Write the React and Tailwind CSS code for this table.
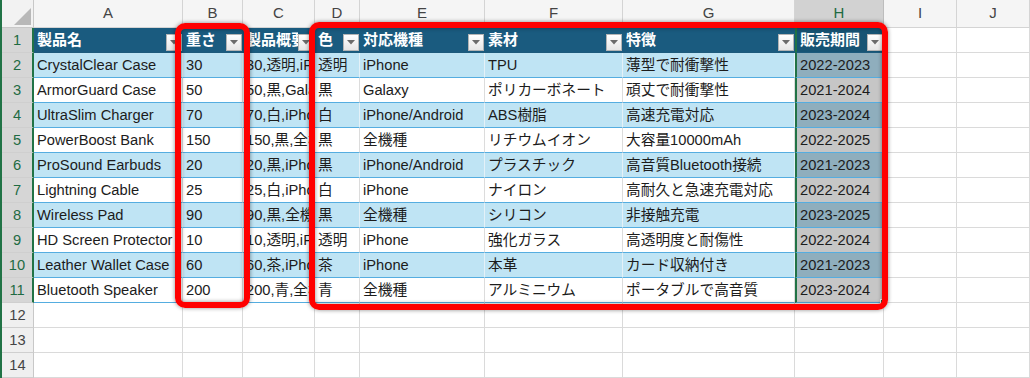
import React from "react";

const cols = ["A", "B", "C", "D", "E", "F", "G", "H", "I", "J"];

const headers = ["製品名", "重さ", "製品概要", "色", "対応機種", "素材", "特徴", "販売期間"];

const rows = [
  ["CrystalClear Case", "30", "30,透明,iPhone,TPU", "透明", "iPhone", "TPU", "薄型で耐衝撃性", "2022-2023"],
  ["ArmorGuard Case", "50", "50,黒,Galaxy", "黒", "Galaxy", "ポリカーボネート", "頑丈で耐衝撃性", "2021-2024"],
  ["UltraSlim Charger", "70", "70,白,iPhone/Android", "白", "iPhone/Android", "ABS樹脂", "高速充電対応", "2023-2024"],
  ["PowerBoost Bank", "150", "150,黒,全機種", "黒", "全機種", "リチウムイオン", "大容量10000mAh", "2022-2025"],
  ["ProSound Earbuds", "20", "20,黒,iPhone/Android", "黒", "iPhone/Android", "プラスチック", "高音質Bluetooth接続", "2021-2023"],
  ["Lightning Cable", "25", "25,白,iPhone", "白", "iPhone", "ナイロン", "高耐久と急速充電対応", "2022-2024"],
  ["Wireless Pad", "90", "90,黒,全機種", "黒", "全機種", "シリコン", "非接触充電", "2023-2025"],
  ["HD Screen Protector", "10", "10,透明,iPhone", "透明", "iPhone", "強化ガラス", "高透明度と耐傷性", "2022-2024"],
  ["Leather Wallet Case", "60", "60,茶,iPhone", "茶", "iPhone", "本革", "カード収納付き", "2021-2023"],
  ["Bluetooth Speaker", "200", "200,青,全機種", "青", "全機種", "アルミニウム", "ポータブルで高音質", "2023-2024"],
];

function FilterButton() {
  return (
    <div className="shrink-0 self-end mb-[1px] mr-[1px] w-[16px] h-[17px] bg-gradient-to-b from-white to-[#e6e6e6] border border-[#b4b4b4] flex items-center justify-center">
      <svg width="8" height="5" viewBox="0 0 8 5">
        <path d="M0 0 L8 0 L4 4.5 Z" fill="#6b6b6b" />
      </svg>
    </div>
  );
}

function RowHead({ n, selected }) {
  return (
    <div
      className={
        "flex items-center justify-center border-b border-[#cfcfcf] " +
        (selected
          ? "bg-[#d6d6d6] text-[#1e6b43] border-r-2 border-r-[#217346]"
          : "bg-[#efefef] text-[#444] border-r border-r-[#c8c8c8]")
      }
    >
      {n}
    </div>
  );
}

export default function App() {
  return (
    <div className="relative w-[1030px] h-[378px] overflow-hidden bg-white font-['Liberation_Sans','Noto_Sans_CJK_JP',sans-serif] text-[14.7px] text-[#1c1c1c] border-l-2 border-[#217346]">
      <div className="grid grid-cols-[32px_149px_60px_72px_45px_125px_138px_172px_89px_73px_73px] grid-rows-[28px_repeat(14,25px)]">
        {/* corner */}
        <div className="bg-[#f2f2f2] border-r border-b border-[#c8c8c8] flex items-end justify-end p-[2px]">
          <svg width="17" height="17" viewBox="0 0 17 17">
            <path d="M17 0 L17 17 L0 17 Z" fill="#b8b8b8" />
          </svg>
        </div>
        {cols.map((c) => (
          <div
            key={c}
            className={
              "flex items-center justify-center text-[15px] " +
              (c === "H"
                ? "bg-[#d2d2d2] text-[#1e6b43] border-r border-[#bdbdbd] border-b-2 border-b-[#217346]"
                : "bg-[#f5f5f5] text-[#444] border-r border-b border-[#d4d4d4]")
            }
          >
            {c}
          </div>
        ))}

        {/* row 1: table header */}
        <RowHead n={1} selected />
        {headers.map((h, i) => (
          <div
            key={h}
            className={
              "flex items-stretch overflow-hidden text-white font-bold text-[15px] border-b border-[#1d5a7c] " +
              (i === 7 ? "bg-[#175474] border-l-2 border-l-[#217346]" : "bg-[#1a5b7f]")
            }
          >
            <div className="flex-1 min-w-0 overflow-hidden whitespace-nowrap flex items-center pl-[3px]">
              {h}
            </div>
            <FilterButton />
          </div>
        ))}
        <div className="border-r border-b border-[#dadada]" />
        <div className="border-r border-b border-[#dadada]" />

        {/* data rows */}
        {rows.map((r, ri) => {
          const blue = ri % 2 === 0;
          return (
            <React.Fragment key={ri}>
              <RowHead n={ri + 2} selected />
              {r.map((v, ci) => {
                const isH = ci === 7;
                let bg = blue ? "bg-[#bfe4f4]" : "bg-white";
                if (isH) bg = blue ? "bg-[#8faebd]" : "bg-[#c6c6c6]";
                return (
                  <div
                    key={ci}
                    className={
                      "flex items-center overflow-hidden whitespace-nowrap pl-[3px] border-b border-b-[#55ade0] " +
                      bg +
                      (isH
                        ? " border-l-2 border-l-[#217346]"
                        : blue
                        ? " border-r border-r-[#e4f1f8]"
                        : " border-r border-r-[#dcdcdc]")
                    }
                  >
                    {v}
                  </div>
                );
              })}
              <div className="border-r border-b border-[#dadada]" />
              <div className="border-r border-b border-[#dadada]" />
            </React.Fragment>
          );
        })}

        {/* empty rows */}
        {[12, 13, 14].map((n) => (
          <React.Fragment key={n}>
            <RowHead n={n} />
            {cols.map((c) => (
              <div key={c} className="border-r border-b border-[#dadada]" />
            ))}
          </React.Fragment>
        ))}
      </div>

      {/* fill handle */}
      <div className="absolute left-[878px] top-[299px] w-[5px] h-[5px] bg-[#217346] border border-white" />

      {/* highlight boxes */}
      <div className="absolute left-[173px] top-[23px] w-[75px] h-[285px] border-[6px] border-[#ff0000] rounded-[10px] shadow-[0_0_4px_rgba(0,0,0,0.45),inset_0_0_4px_rgba(0,0,0,0.45)]" />
      <div className="absolute left-[307px] top-[22px] w-[579px] h-[288px] border-[6px] border-[#ff0000] rounded-[10px] shadow-[0_0_4px_rgba(0,0,0,0.45),inset_0_0_4px_rgba(0,0,0,0.45)]" />
    </div>
  );
}
